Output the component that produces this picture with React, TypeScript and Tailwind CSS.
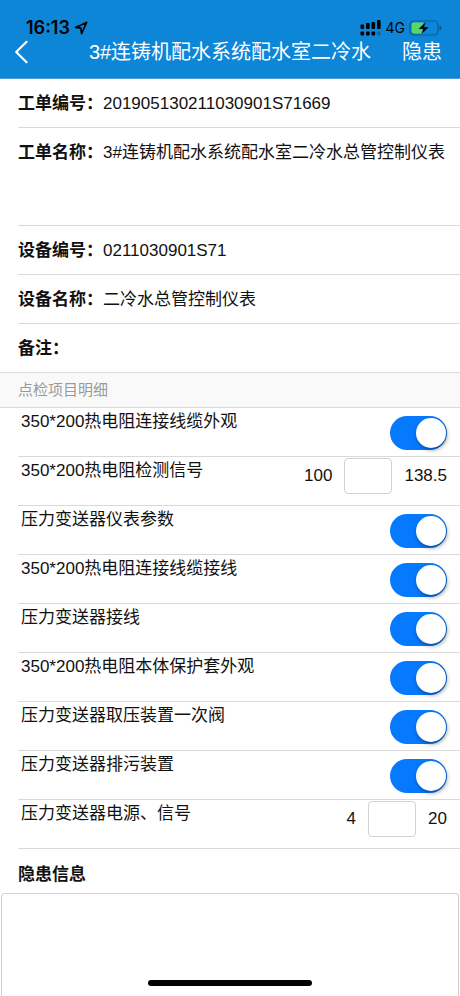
import React, { useState } from 'react';

interface OrderField {
  label: string;
  value: string;
  tall?: boolean;
}

interface CheckItem {
  id: string;
  name: string;
  range?: [string, string];
}

const fields: OrderField[] = [
  { label: '工单编号：', value: '201905130211030901S71669' },
  { label: '工单名称：', value: '3#连铸机配水系统配水室二冷水总管控制仪表', tall: true },
  { label: '设备编号：', value: '0211030901S71' },
  { label: '设备名称：', value: '二冷水总管控制仪表' },
  { label: '备注：', value: '' },
];

const items: CheckItem[] = [
  { id: 'cable-look', name: '350*200热电阻连接线缆外观' },
  { id: 'signal', name: '350*200热电阻检测信号', range: ['100', '138.5'] },
  { id: 'meter', name: '压力变送器仪表参数' },
  { id: 'cable-wiring', name: '350*200热电阻连接线缆接线' },
  { id: 'wiring', name: '压力变送器接线' },
  { id: 'sleeve', name: '350*200热电阻本体保护套外观' },
  { id: 'valve', name: '压力变送器取压装置一次阀' },
  { id: 'drain', name: '压力变送器排污装置' },
  { id: 'power', name: '压力变送器电源、信号', range: ['4', '20'] },
];

function StatusBar() {
  return (
    <div className="flex h-6 items-center justify-between pl-[26px] pr-[18px] text-black">
      <div className="flex items-center gap-1">
        <span className="font-[Inter] text-[18px] font-semibold leading-6">16:13</span>
        <svg width="14" height="14" viewBox="0 0 14 14" fill="none" stroke="currentColor" strokeWidth="1.7" strokeLinejoin="round">
          <path d="M12.6 1.4 L1.6 6.4 L6.8 7.2 L7.6 12.6 Z" />
        </svg>
      </div>
      <div className="flex items-center gap-1">
        <svg width="22" height="18" viewBox="0 0 22 18" fill="currentColor">
          <rect x="0.5" y="5.5" width="3.6" height="4.5" rx="1" />
          <rect x="6" y="4" width="3.6" height="6" rx="1" />
          <rect x="11.5" y="3" width="3.6" height="7" rx="1" />
          <rect x="17" y="1" width="3.6" height="9" rx="1" />
          <rect x="0.5" y="12.5" width="3.6" height="4" rx="1" />
          <rect x="6" y="12.5" width="3.6" height="4" rx="1" />
          <rect x="11.5" y="12.5" width="3.6" height="4" rx="1" />
          <rect x="17" y="12.5" width="3.6" height="4" rx="1" opacity="0.25" />
        </svg>
        <span className="font-[Inter] text-[14px] leading-6">4G</span>
        <svg width="33" height="16" viewBox="0 0 33 16">
          <rect x="1" y="1" width="28" height="14" rx="4" fill="none" stroke="#0a5c9e" strokeWidth="1.2" />
          <path d="M5 2.6 H14.5 V13.4 H5 Q2.6 13.4 2.6 11 V5 Q2.6 2.6 5 2.6 Z" fill="#58d765" />
          <path d="M30.5 5.8 Q32.5 6.4 32.5 8 Q32.5 9.6 30.5 10.2 Z" fill="#0a4f86" />
          <path d="M16.8 1.8 L9.6 9 H14 L12.4 14.4 L20 7 H15.4 Z" fill="#000" stroke="#0d86d8" strokeWidth="0.5" />
        </svg>
      </div>
    </div>
  );
}

function Header() {
  return (
    <header className="border-b border-[#4a9bd6] bg-[#0d86d8] pb-[14px] pt-4">
      <StatusBar />
      <div className="grid h-6 grid-cols-[1fr_auto_1fr] items-center whitespace-nowrap text-[20px] leading-6 text-white">
        <button type="button" aria-label="返回" className="justify-self-start pl-[14px]">
          <svg width="15" height="24" viewBox="0 0 15 24" fill="none" stroke="currentColor" strokeWidth="2.2" strokeLinecap="round" strokeLinejoin="round">
            <path d="M12.6 1.8 L2.2 12 L12.6 22.2" />
          </svg>
        </button>
        <h1>3#连铸机配水系统配水室二冷水</h1>
        <button type="button" className="justify-self-end pr-[18px]">隐患</button>
      </div>
    </header>
  );
}

function Switch({ id }: { id: string }) {
  const [on, setOn] = useState(true);

  return (
    <input
      id={id}
      type="checkbox"
      role="switch"
      checked={on}
      onChange={(e) => setOn(e.target.checked)}
      className="mt-2 flex h-[34px] w-[57px] shrink-0 cursor-pointer appearance-none items-center rounded-full bg-gray-300 px-0.5 before:size-[30px] before:rounded-full before:bg-white before:shadow-[1px_2px_4px_rgba(0,0,0,0.4)] checked:justify-end checked:bg-[#057aff] checked:pr-px"
    />
  );
}

function CheckRow({ item }: { item: CheckItem }) {
  return (
    <li className="ml-[18px] flex h-[49px] items-start justify-between border-b border-[#d9d9d9] pl-[3px] pr-[13px]">
      <label htmlFor={item.id} className="pt-0.5">{item.name}</label>
      {item.range ? (
        <div className="flex items-center gap-3 leading-[38px]">
          <span>{item.range[0]}</span>
          <input
            id={item.id}
            type="text"
            inputMode="decimal"
            className="h-9 w-[48px] rounded border border-[#d2d2d2] bg-white px-2"
          />
          <span>{item.range[1]}</span>
        </div>
      ) : (
        <Switch id={item.id} />
      )}
    </li>
  );
}

export default function App() {
  return (
    <div className="flex min-h-screen flex-col bg-white font-['Liberation_Sans','Noto_Sans_CJK_SC',sans-serif] text-[17px] leading-6 text-[#111]">
      <Header />

      {/* Work order */}
      <dl>
        {fields.map((field) => (
          <div
            key={field.label}
            className={`ml-[18px] flex whitespace-nowrap border-b border-[#d9d9d9] pt-[13px] last:ml-0 last:pl-[18px] ${
              field.tall ? 'h-[98px]' : 'h-[49px]'
            }`}
          >
            <dt className="font-bold">{field.label}</dt>
            <dd>{field.value}</dd>
          </div>
        ))}
      </dl>

      {/* Check items */}
      <h2 className="border-b border-[#d9d9d9] bg-[#f9f9f9] py-[5px] pl-[18px] text-[15px] text-[#999]">
        点检项目明细
      </h2>
      <ul>
        {items.map((item) => (
          <CheckRow key={item.id} item={item} />
        ))}
      </ul>

      {/* Hazard report */}
      <label htmlFor="hazard" className="pb-1.5 pl-[18px] pt-[14px] font-bold">
        隐患信息
      </label>
      <textarea
        id="hazard"
        className="mx-px min-h-[100px] flex-1 resize-none rounded-t border border-b-0 border-[#d2d2d2] bg-white p-3"
      />

      <div className="fixed bottom-[10px] left-1/2 h-[6px] w-[164px] -translate-x-1/2 rounded-full bg-black" />
    </div>
  );
}
